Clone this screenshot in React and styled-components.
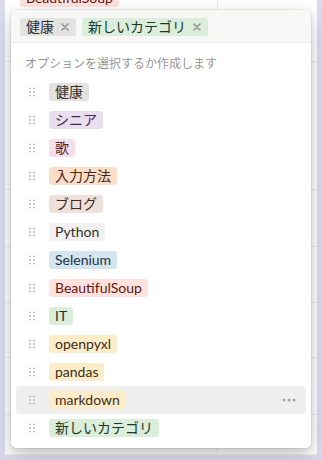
import React from "react";
import styled, { createGlobalStyle } from "styled-components";

const Global = createGlobalStyle`
  html, body { margin: 0; padding: 0; }
  body {
    width: 322px;
    height: 460px;
    overflow: hidden;
    background: #dcdcef;
    font-family: "Lato", "Noto Sans CJK JP", sans-serif;
  }
`;

const COLORS = {
  lightgray: { bg: "#f1f1ef", fg: "#32302c" },
  gray: { bg: "#e3e2e0", fg: "#32302c" },
  brown: { bg: "#eee0da", fg: "#442a1e" },
  orange: { bg: "#fadec9", fg: "#49290e" },
  yellow: { bg: "#fdecc8", fg: "#402c1b" },
  green: { bg: "#dbeddb", fg: "#1c3829" },
  blue: { bg: "#d3e5ef", fg: "#183347" },
  purple: { bg: "#e8deee", fg: "#412454" },
  pink: { bg: "#f5e0e9", fg: "#4c2337" },
  red: { bg: "#ffe2dd", fg: "#5d1715" },
};

const Stage = styled.div`
  position: relative;
  width: 322px;
  height: 460px;
  padding: 0 5px;
  box-sizing: border-box;
`;

const Table = styled.div`
  background: #ffffff;
  height: 455px;
  display: flex;
  flex-direction: column;
  overflow: hidden;
  border-bottom: 1px solid #e4e4e2;
`;

const TableRow = styled.div`
  display: grid;
  grid-template-columns: 213px 1fr;
  height: ${(p) => p.$h}px;
  flex: none;
  border-bottom: 1px solid #ececea;
  box-sizing: border-box;
`;

const TableCell = styled.div`
  border-right: ${(p) => (p.$last ? "none" : "1px solid #ececea")};
  padding: 0 0 0 15px;
  display: flex;
  align-items: flex-start;
  overflow: hidden;
`;

const Popup = styled.div`
  position: absolute;
  left: 11px;
  top: 10px;
  width: 300px;
  height: 438px;
  background: #ffffff;
  border-radius: 5px;
  box-shadow: rgba(15, 15, 15, 0.05) 0 0 0 1px, rgba(15, 15, 15, 0.1) 0 3px 6px,
    rgba(15, 15, 15, 0.2) 0 9px 24px;
  display: flex;
  flex-direction: column;
  overflow: hidden;
`;

const Header = styled.div`
  background: #f7f7f5;
  border-bottom: 1px solid #e9e9e7;
  height: 33px;
  box-sizing: border-box;
  padding: 8px 9px 0;
  display: flex;
  align-items: flex-start;
  gap: 6px;
`;

const Tag = styled.span`
  display: inline-flex;
  align-items: center;
  height: 18px;
  padding: 0 ${(p) => (p.$closable ? "1px" : "6px")} 0 6px;
  border-radius: 3px;
  background: ${(p) => COLORS[p.$color].bg};
  color: ${(p) => COLORS[p.$color].fg};
  font-size: 14px;
  line-height: 18px;
  white-space: nowrap;
  box-sizing: border-box;
  flex: none;
`;

const CutTag = styled(Tag)`
  margin-top: -11px;
`;

const CloseBtn = styled.span`
  width: 20px;
  height: 18px;
  display: inline-flex;
  align-items: center;
  justify-content: center;
  margin-left: 1px;
  color: rgba(55, 53, 47, 0.45);
`;

const Hint = styled.div`
  padding: 13px 14px 6px;
  font-size: 12px;
  line-height: 16px;
  color: rgba(55, 53, 47, 0.55);
`;

const List = styled.div`
  display: flex;
  flex-direction: column;
  padding: 0 5px;
`;

const Row = styled.div`
  height: 28px;
  display: flex;
  align-items: center;
  border-radius: 4px;
  background: ${(p) => (p.$active ? "#efefee" : "transparent")};
  padding: 0 10px 0 12px;
`;

const Handle = styled.span`
  width: 8px;
  height: 12px;
  display: inline-flex;
  color: #b8b8b6;
  margin-right: 13px;
`;

const More = styled.span`
  margin-left: auto;
  display: inline-flex;
  color: #a5a5a3;
`;

const CloseIcon = () => (
  <svg width="8" height="8" viewBox="0 0 8 8">
    <path d="M1 1L7 7M7 1L1 7" stroke="currentColor" strokeWidth="1.6" strokeLinecap="round" />
  </svg>
);

const DragIcon = () => (
  <svg width="8" height="12" viewBox="0 0 8 12">
    {[2.5, 6, 9.5].map((y) =>
      [2, 6].map((x) => <circle key={`${x}-${y}`} cx={x} cy={y} r="0.95" fill="currentColor" />)
    )}
  </svg>
);

const DotsIcon = () => (
  <svg width="14" height="4" viewBox="0 0 14 4">
    {[2, 7, 12].map((x) => (
      <circle key={x} cx={x} cy="2" r="1.5" fill="currentColor" />
    ))}
  </svg>
);

const options = [
  ["健康", "gray"],
  ["シニア", "purple"],
  ["歌", "pink"],
  ["入力方法", "orange"],
  ["ブログ", "brown"],
  ["Python", "lightgray"],
  ["Selenium", "blue"],
  ["BeautifulSoup", "red"],
  ["IT", "green"],
  ["openpyxl", "yellow"],
  ["pandas", "yellow"],
  ["markdown", "yellow"],
  ["新しいカテゴリ", "green"],
];

const selected = [
  ["健康", "gray"],
  ["新しいカテゴリ", "green"],
];

const bgRows = [62, 128, 57, 56, 55, 57, 40];

export default function App() {
  return (
    <>
      <Global />
      <Stage>
        <Table>
          {bgRows.map((h, i) => (
            <TableRow key={i} $h={h}>
              <TableCell>
                {i === 0 && <CutTag $color="red">BeautifulSoup</CutTag>}
              </TableCell>
              <TableCell $last />
            </TableRow>
          ))}
        </Table>
        <Popup>
          <Header>
            {selected.map(([label, color]) => (
              <Tag key={label} $color={color} $closable>
                {label}
                <CloseBtn>
                  <CloseIcon />
                </CloseBtn>
              </Tag>
            ))}
          </Header>
          <Hint>オプションを選択するか作成します</Hint>
          <List>
            {options.map(([label, color]) => (
              <Row key={label} $active={label === "markdown"}>
                <Handle>
                  <DragIcon />
                </Handle>
                <Tag $color={color}>{label}</Tag>
                {label === "markdown" && (
                  <More>
                    <DotsIcon />
                  </More>
                )}
              </Row>
            ))}
          </List>
        </Popup>
      </Stage>
    </>
  );
}
